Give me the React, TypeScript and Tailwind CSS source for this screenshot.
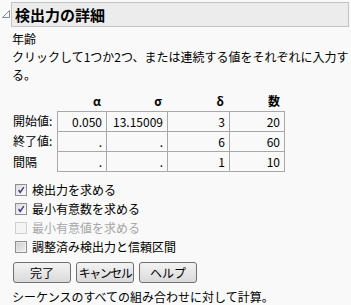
import React from "react";

const cols = ["α", "σ", "δ", "数"];
const rows = [
  { label: "開始値:", vals: ["0.050", "13.15009", "3", "20"] },
  { label: "終了値:", vals: [".", ".", "6", "60"] },
  { label: "間隔", vals: [".", ".", "1", "10"] },
];
const widths = ["w-[49px]", "w-[61px]", "w-[62px]", "w-[56px]"];

function Check({ checked, disabled, label }: { checked?: boolean; disabled?: boolean; label: string }) {
  return (
    <div className="flex items-center h-[19px] pl-[3px]">
      <div
        className={
          disabled
            ? "w-[12px] h-[12px] border border-[#d0d0d0] bg-[#f4f4f4]"
            : "w-[12px] h-[12px] border border-[#8e8f8f] bg-gradient-to-br from-[#dcdcdc] to-[#fbfbfb] p-[1px]"
        }
      >
        {checked && (
          <svg viewBox="0 0 10 10" className="w-full h-full">
            <path d="M2 5 L4 8 L8.5 1.5" fill="none" stroke="#46358f" strokeWidth="1.8" />
          </svg>
        )}
        {!checked && !disabled && <div className="w-full h-full bg-gradient-to-br from-[#cfcfcf] to-[#ededed]" />}
      </div>
      <span className={"ml-[5px] leading-[19px] " + (disabled ? "text-[#a6a6a6]" : "text-black")}>{label}</span>
    </div>
  );
}

function Btn({ children, tight }: { children: React.ReactNode; tight?: boolean }) {
  return (
    <div
      className={
        "w-[58px] h-[21px] rounded-[3px] border border-[#707070] bg-gradient-to-b from-[#f3f3f3] to-[#dadada] flex items-center justify-center leading-none whitespace-nowrap " +
        (tight ? "tracking-[-1.5px]" : "")
      }
    >
      {children}
    </div>
  );
}

export default function App() {
  return (
    <div className="w-[351px] h-[305px] overflow-hidden bg-[#f9f9f9] text-[12px] text-black font-['Noto_Sans_CJK_JP',sans-serif]">
      {/* title bar */}
      <div className="flex items-start pt-[2px] pl-[2px]">
        <svg width="8" height="8" viewBox="0 0 8 8" className="mt-[8px]">
          <polygon points="7.5,0.5 7.5,7.5 0.5,7.5" fill="none" stroke="#8a8a8a" strokeWidth="1" />
        </svg>
        <div className="ml-[1px] w-[338px] h-[25px] border border-[#c4c4c4] bg-[#ececec] flex items-center pl-[3px] text-[15px] font-bold leading-none">
          検出力の詳細
        </div>
      </div>

      <div className="pl-[12px]">
        <div className="mt-[3px] leading-[18px]">年齢</div>
        <div className="leading-[18px] whitespace-nowrap">クリックして1つか2つ、または連続する値をそれぞれに入力す</div>
        <div className="leading-[18px]">る。</div>

        {/* table */}
        <div className="mt-[6px]">
          <div className="flex h-[21px] items-center font-bold">
            <div className="w-[45px]" />
            {cols.map((c, i) => (
              <div key={c} className={widths[i] + " text-right pr-[5px]"}>
                {c}
              </div>
            ))}
          </div>
          {rows.map((r, ri) => (
            <div key={r.label} className="flex">
              <div className={"w-[45px] pl-[1px] flex items-center " + (ri === 2 ? "h-[21px]" : "h-[20px]")}>{r.label}</div>
              {r.vals.map((v, i) => (
                <div
                  key={i}
                  className={
                    widths[i] +
                    " border-t border-l border-[#a8a8a8] text-right pr-[4px] flex items-center justify-end " +
                    (i === 3 ? "border-r " : "") +
                    (ri === 2 ? "h-[21px] border-b" : "h-[20px]")
                  }
                >
                  {v}
                </div>
              ))}
            </div>
          ))}
        </div>

        <div className="mt-[8px]">
          <Check checked label="検出力を求める" />
          <Check checked label="最小有意数を求める" />
          <Check disabled label="最小有意値を求める" />
          <Check label="調整済み検出力と信頼区間" />
        </div>

        <div className="mt-[6px] ml-[1px] flex gap-[5px]">
          <Btn>完了</Btn>
          <Btn tight>キャンセル</Btn>
          <Btn>ヘルプ</Btn>
        </div>

        <div className="mt-[5px] leading-[18px]">シーケンスのすべての組み合わせに対して計算。</div>
      </div>
    </div>
  );
}
